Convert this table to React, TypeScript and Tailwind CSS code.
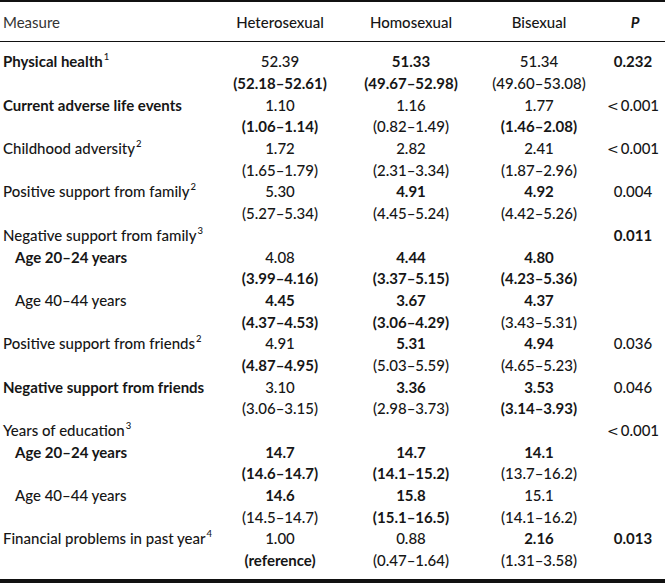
import React from "react";

type Cell = [React.ReactNode, boolean];
type Row = {
  label?: React.ReactNode;
  indent?: boolean;
  lb?: boolean;
  cells: Cell[];
};

const Sup = ({ n }: { n: string }) => (
  <sup className="text-[9.5px] -top-[0.75em] ml-[1px] font-medium">{n}</sup>
);

const LT = (
  <>
    <span className="text-[14px] mr-[2px]" style={{ fontFamily: "'DejaVu Sans', sans-serif" }}>
      {"<"}
    </span>
    0.001
  </>
);

const rows: Row[] = [
  { label: <>Physical health<Sup n="1" /></>, lb: true, cells: [["52.39", false], ["51.33", true], ["51.34", false], ["0.232", true]] },
  { cells: [["(52.18–52.61)", true], ["(49.67–52.98)", true], ["(49.60–53.08)", false], ["", false]] },
  { label: "Current adverse life events", lb: true, cells: [["1.10", false], ["1.16", false], ["1.77", false], [LT, false]] },
  { cells: [["(1.06–1.14)", true], ["(0.82–1.49)", false], ["(1.46–2.08)", true], ["", false]] },
  { label: <>Childhood adversity<Sup n="2" /></>, cells: [["1.72", false], ["2.82", false], ["2.41", false], [LT, false]] },
  { cells: [["(1.65–1.79)", false], ["(2.31–3.34)", false], ["(1.87–2.96)", false], ["", false]] },
  { label: <>Positive support from family<Sup n="2" /></>, cells: [["5.30", false], ["4.91", true], ["4.92", true], ["0.004", false]] },
  { cells: [["(5.27–5.34)", false], ["(4.45–5.24)", false], ["(4.42–5.26)", false], ["", false]] },
  { label: <>Negative support from family<Sup n="3" /></>, cells: [["", false], ["", false], ["", false], ["0.011", true]] },
  { label: "Age 20–24 years", indent: true, lb: true, cells: [["4.08", false], ["4.44", true], ["4.80", true], ["", false]] },
  { cells: [["(3.99–4.16)", true], ["(3.37–5.15)", true], ["(4.23–5.36)", true], ["", false]] },
  { label: "Age 40–44 years", indent: true, cells: [["4.45", true], ["3.67", true], ["4.37", true], ["", false]] },
  { cells: [["(4.37–4.53)", true], ["(3.06–4.29)", true], ["(3.43–5.31)", false], ["", false]] },
  { label: <>Positive support from friends<Sup n="2" /></>, cells: [["4.91", false], ["5.31", true], ["4.94", true], ["0.036", false]] },
  { cells: [["(4.87–4.95)", true], ["(5.03–5.59)", false], ["(4.65–5.23)", false], ["", false]] },
  { label: "Negative support from friends", lb: true, cells: [["3.10", false], ["3.36", true], ["3.53", true], ["0.046", false]] },
  { cells: [["(3.06–3.15)", false], ["(2.98–3.73)", false], ["(3.14–3.93)", true], ["", false]] },
  { label: <>Years of education<Sup n="3" /></>, cells: [["", false], ["", false], ["", false], [LT, false]] },
  { label: "Age 20–24 years", indent: true, lb: true, cells: [["14.7", true], ["14.7", true], ["14.1", true], ["", false]] },
  { cells: [["(14.6–14.7)", true], ["(14.1–15.2)", true], ["(13.7–16.2)", false], ["", false]] },
  { label: "Age 40–44 years", indent: true, cells: [["14.6", true], ["15.8", true], ["15.1", false], ["", false]] },
  { cells: [["(14.5–14.7)", false], ["(15.1–16.5)", true], ["(14.1–16.2)", false], ["", false]] },
  { label: <>Financial problems in past year<Sup n="4" /></>, cells: [["1.00", false], ["0.88", false], ["2.16", true], ["0.013", true]] },
  { cells: [["(reference)", true], ["(0.47–1.64)", false], ["(1.31–3.58)", false], ["", false]] },
];

const cols = "grid grid-cols-[215px_130px_132px_124px_64px] items-center";

export default function App() {
  return (
    <div
      className="w-[665px] h-[584px] bg-white text-[#161616] text-[15px] font-medium overflow-hidden"
      style={{ fontFamily: "Lato, 'Open Sans', sans-serif" }}
    >
      <div className="border-t-2 border-b border-[#111]">
        <div className={`${cols} h-[39px] pt-[1px]`}>
          <div className="pl-[3px] text-[#333] font-normal">Measure</div>
          <div className="text-center">Heterosexual</div>
          <div className="text-center">Homosexual</div>
          <div className="text-center">Bisexual</div>
          <div className="text-center font-bold italic pl-[4px]">P</div>
        </div>
      </div>
      <div className="pt-[9px] pb-[7px] border-b-4 border-[#111]">
        {rows.map((r, i) => (
          <div key={i} className={`${cols} h-[21.7px] leading-none`}>
            <div
              className={`${r.indent ? "pl-[15px]" : "pl-[3px]"} ${r.lb ? "font-bold" : "font-medium"} whitespace-nowrap`}
            >
              {r.label ?? ""}
            </div>
            {r.cells.map(([t, b], j) => (
              <div key={j} className={`text-center whitespace-nowrap ${b ? "font-bold" : "font-medium"}`}>
                {t}
              </div>
            ))}
          </div>
        ))}
      </div>
    </div>
  );
}
